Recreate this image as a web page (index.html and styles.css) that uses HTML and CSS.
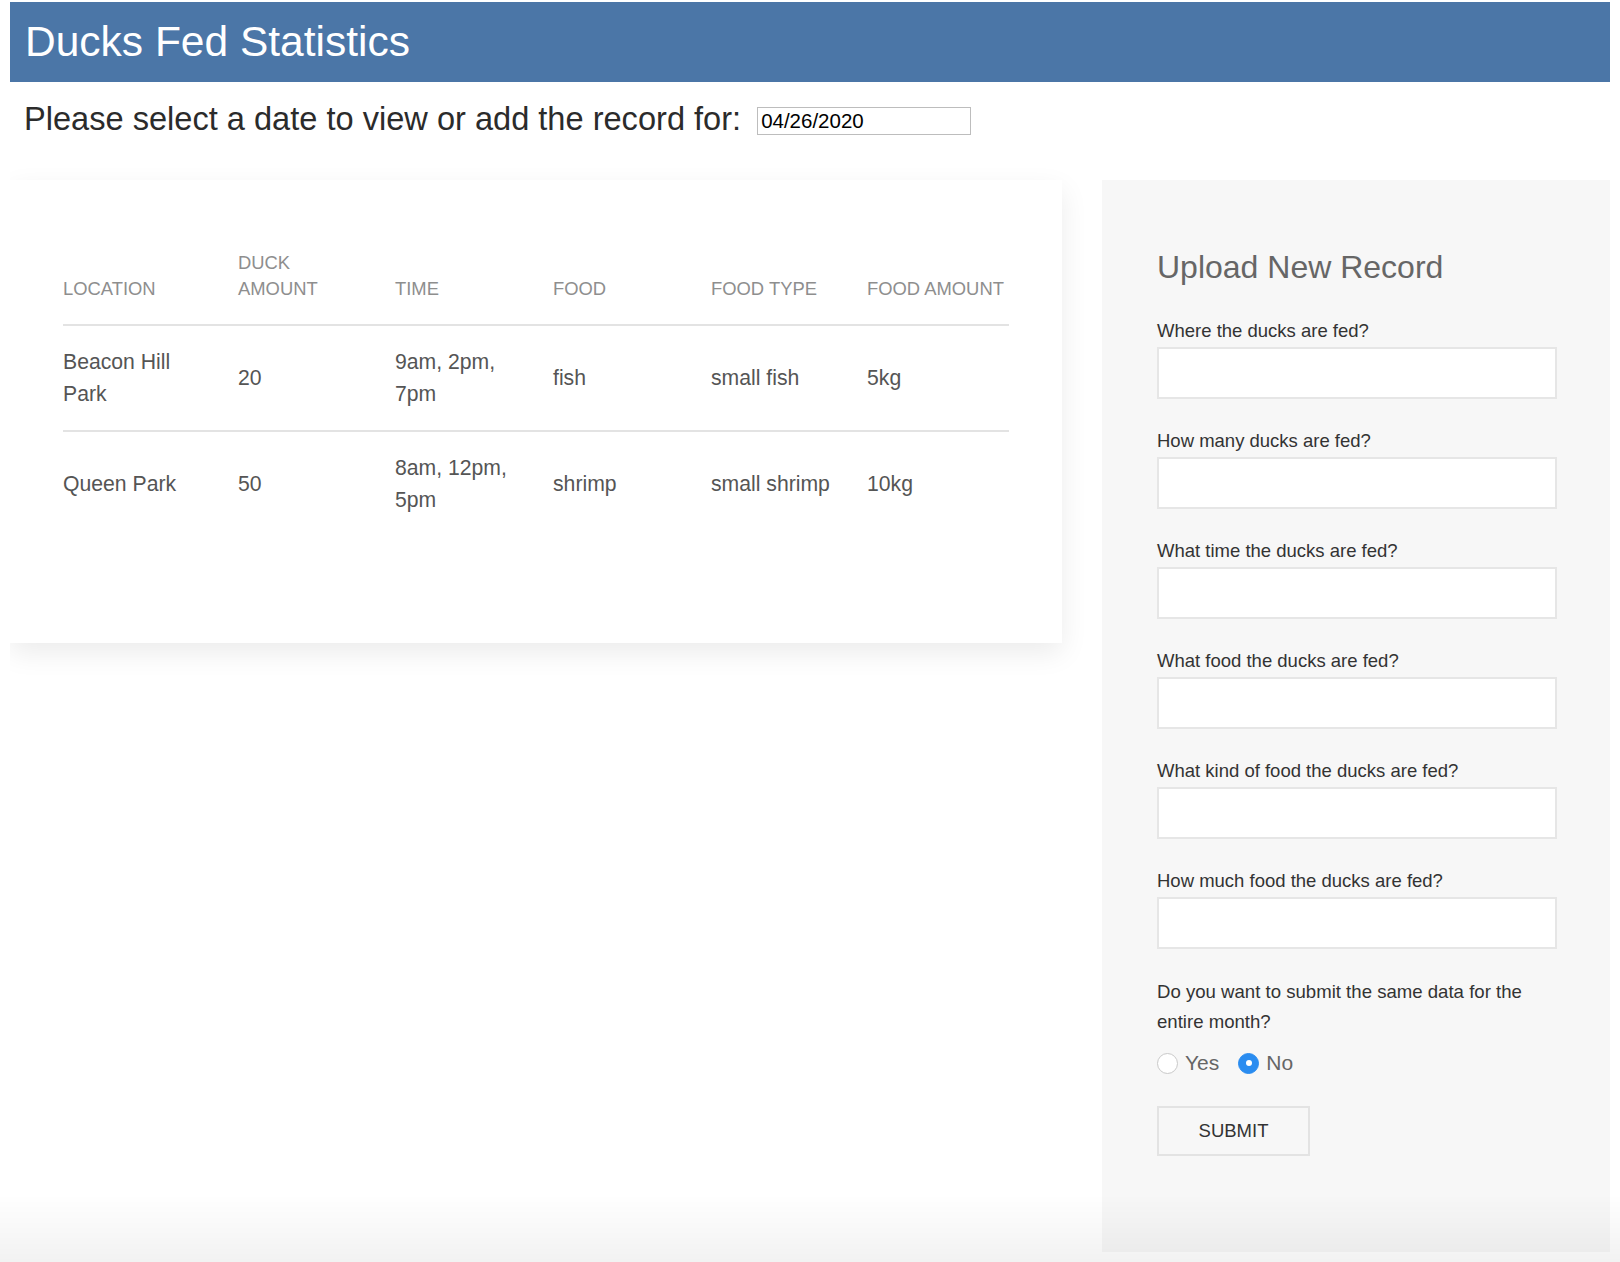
FILE: index.html
```html
<!DOCTYPE html>
<html lang="en">
<head>
<meta charset="utf-8">
<title>Ducks Fed Statistics</title>
<link rel="stylesheet" href="styles.css">
</head>
<body>
<header class="topbar">
  <h1 class="title">Ducks Fed Statistics</h1>
</header>
<div class="date-row">
  <label class="date-label" for="date">Please select a date to view or add the record for:</label>
  <input class="date-input" id="date" type="text" value="04/26/2020">
</div>
<main class="content">
  <section class="card">
    <table class="records">
      <colgroup>
        <col class="c-loc"><col class="c-duck"><col class="c-time"><col class="c-food"><col class="c-type"><col class="c-amt">
      </colgroup>
      <thead>
        <tr><th>LOCATION</th><th>DUCK AMOUNT</th><th>TIME</th><th>FOOD</th><th>FOOD TYPE</th><th>FOOD AMOUNT</th></tr>
      </thead>
      <tbody>
        <tr><td>Beacon Hill Park</td><td>20</td><td>9am, 2pm, 7pm</td><td>fish</td><td>small fish</td><td>5kg</td></tr>
        <tr><td>Queen Park</td><td>50</td><td>8am, 12pm, 5pm</td><td>shrimp</td><td>small shrimp</td><td>10kg</td></tr>
      </tbody>
    </table>
  </section>
  <aside class="panel">
    <h2 class="panel-title">Upload New Record</h2>
    <form class="form">
      <div class="field"><label for="f1">Where the ducks are fed?</label><input id="f1" class="text-input" type="text"></div>
      <div class="field"><label for="f2">How many ducks are fed?</label><input id="f2" class="text-input" type="text"></div>
      <div class="field"><label for="f3">What time the ducks are fed?</label><input id="f3" class="text-input" type="text"></div>
      <div class="field"><label for="f4">What food the ducks are fed?</label><input id="f4" class="text-input" type="text"></div>
      <div class="field"><label for="f5">What kind of food the ducks are fed?</label><input id="f5" class="text-input" type="text"></div>
      <div class="field"><label for="f6">How much food the ducks are fed?</label><input id="f6" class="text-input" type="text"></div>
      <p class="question">Do you want to submit the same data for the entire month?</p>
      <div class="radios">
        <label class="radio"><input type="radio" name="month" value="yes"><span>Yes</span></label>
        <label class="radio"><input type="radio" name="month" value="no" checked><span>No</span></label>
      </div>
      <button class="submit" type="button">SUBMIT</button>
    </form>
  </aside>
</main>
<div class="bottom-fade"></div>
</body>
</html>
```
FILE: styles.css
```css
html, body {
  background: #fff;
}
body {
  margin: 2px 10px 0;
  font-family: "Liberation Sans", Arial, Helvetica, sans-serif;
  color: #333;
}
.topbar {
  background: #4b76a7;
  height: 80px;
  display: flex;
  align-items: center;
  padding-left: 15px;
}
.title {
  margin: 0;
  color: #fff;
  font-size: 42.5px;
  font-weight: normal;
  line-height: 1;
}
.date-row {
  display: flex;
  align-items: center;
  gap: 16px;
  margin-top: 17px;
  padding-left: 14px;
  height: 40px;
}
.date-label {
  font-size: 32.6px;
  line-height: 40px;
  color: #2b2b2b;
}
.date-input {
  box-sizing: border-box;
  width: 214px;
  height: 28px;
  margin-top: 4px;
  border: 1px solid #bdbdbd;
  padding: 0 3px;
  font-family: "Liberation Sans", Arial, sans-serif;
  font-size: 20.5px;
  color: #000;
  background: #fff;
  outline: none;
}
.content {
  display: flex;
  align-items: flex-start;
  gap: 40px;
  margin-top: 41px;
}
.card {
  width: 1052px;
  box-sizing: border-box;
  padding: 70px 53px 107px;
  background: #fff;
  box-shadow: 0 10px 26px rgba(0, 0, 0, 0.08);
}
.records {
  width: 100%;
  border-collapse: collapse;
  table-layout: fixed;
}
.c-loc { width: 175px; }
.c-duck { width: 157px; }
.c-time { width: 158px; }
.c-food { width: 158px; }
.c-type { width: 156px; }
.c-amt { width: 142px; }
.records th {
  font-size: 18.4px;
  line-height: 26px;
  font-weight: normal;
  color: #8e8e8e;
  text-align: left;
  vertical-align: bottom;
  padding: 0 30px 22px 0;
  border-bottom: 2px solid #e3e3e3;
}
.records td {
  font-size: 21.2px;
  line-height: 32px;
  color: #555;
  padding: 20px 30px 20px 0;
  vertical-align: middle;
}
.records th:last-child,
.records td:last-child {
  padding-right: 0;
  white-space: nowrap;
}
.records tbody tr:not(:last-child) td {
  border-bottom: 2px solid #e3e3e3;
}
.panel {
  width: 508px;
  box-sizing: border-box;
  padding: 67px 55px 96px;
  background: #f7f7f7;
}
.panel-title {
  margin: 0;
  font-size: 32px;
  line-height: 40px;
  font-weight: normal;
  color: #666;
}
.form {
  margin-top: 30px;
}
.field label {
  display: block;
  font-size: 18.5px;
  line-height: 28px;
  color: #333;
  margin-bottom: 2px;
}
.field + .field {
  margin-top: 28px;
}
.text-input {
  display: block;
  box-sizing: border-box;
  width: 400px;
  height: 52px;
  border: 2px solid #e6e6e6;
  background: #fff;
  outline: none;
}
.question {
  margin: 28px 0 0;
  max-width: 395px;
  font-size: 18.6px;
  line-height: 30px;
  color: #333;
}
.radios {
  display: flex;
  align-items: center;
  gap: 19px;
  height: 30px;
  margin-top: 11px;
}
.radio {
  display: flex;
  align-items: center;
  gap: 7px;
  font-size: 21px;
  color: #666;
}
.radio input {
  appearance: none;
  -webkit-appearance: none;
  margin: 0;
  width: 21px;
  height: 21px;
  border-radius: 50%;
  border: 1.5px solid #c9c9c9;
  background: #fff;
  box-sizing: border-box;
  position: relative;
}
.radio input:checked {
  border-color: #2a8cf0;
  background: #2a8cf0;
}
.radio input:checked::after {
  content: "";
  position: absolute;
  left: 50%;
  top: 50%;
  width: 6px;
  height: 6px;
  margin: -3px 0 0 -3px;
  border-radius: 50%;
  background: #fff;
}
.submit {
  display: block;
  margin-top: 28px;
  width: 153px;
  height: 50px;
  box-sizing: border-box;
  border: 2px solid #e3e3e3;
  background: transparent;
  font-family: "Liberation Sans", Arial, sans-serif;
  font-size: 18.5px;
  color: #333;
  padding: 0;
}
.bottom-fade {
  position: fixed;
  left: 0;
  right: 0;
  bottom: 0;
  height: 68px;
  pointer-events: none;
  background: linear-gradient(to bottom, rgba(0, 0, 0, 0), rgba(0, 0, 0, 0.05));
}
```
